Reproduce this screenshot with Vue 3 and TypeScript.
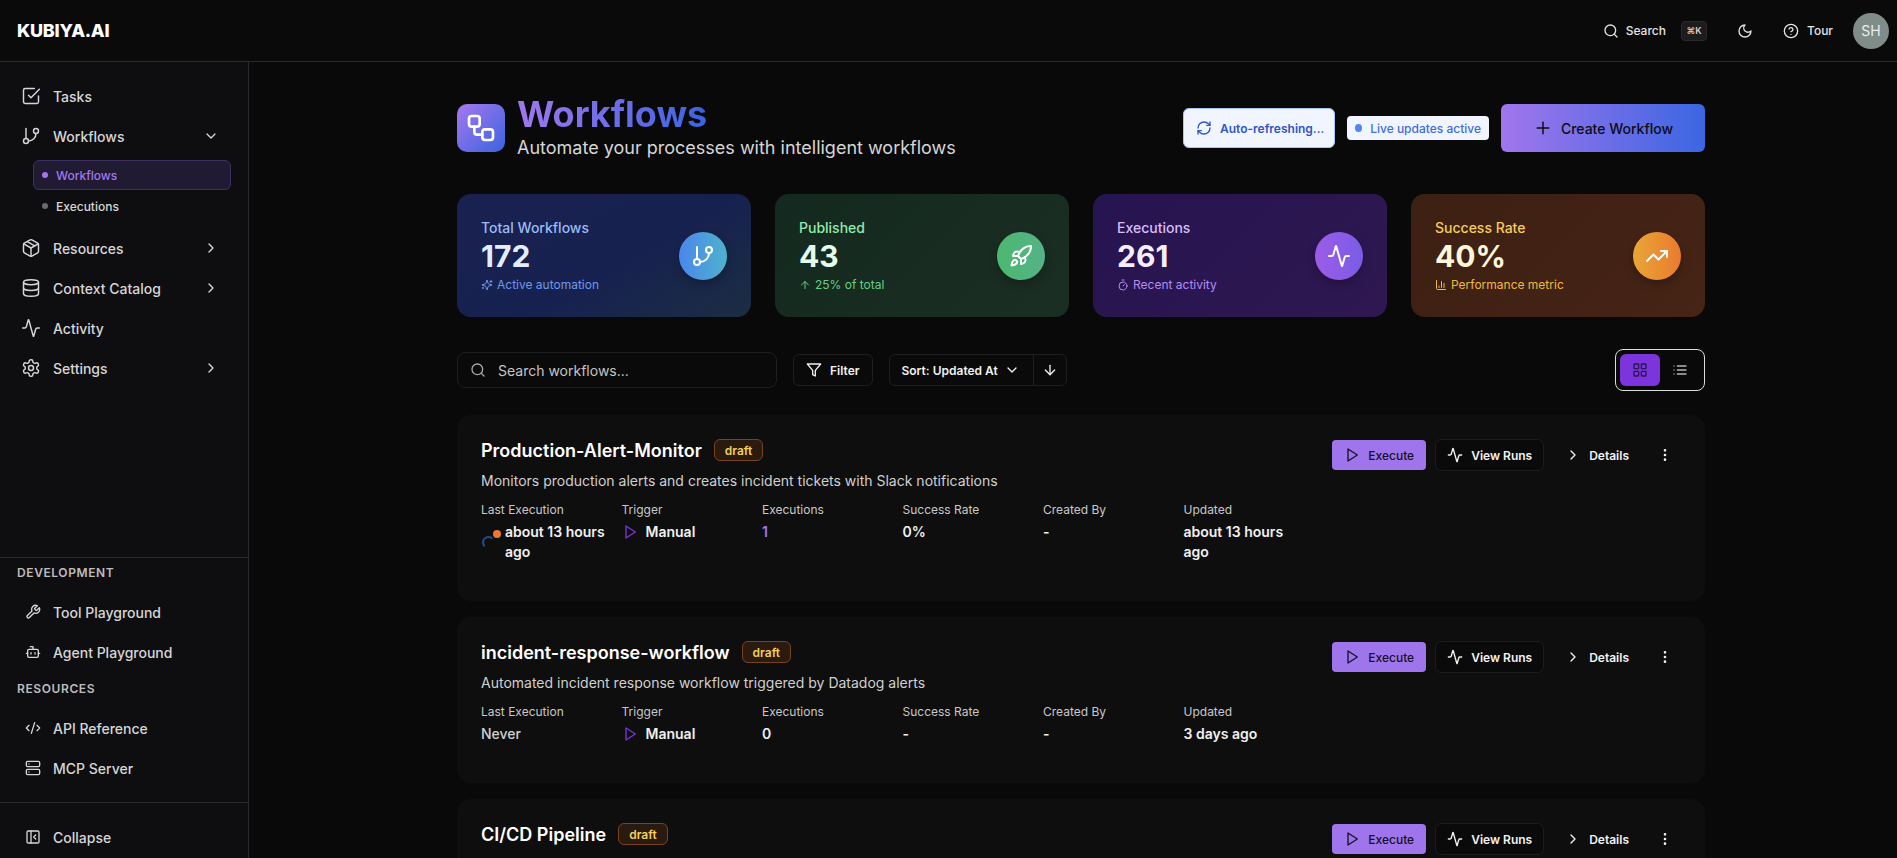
<script setup lang="ts">
const icons: Record<string, string> = {
	tasks: '<polyline points="9 11 12 14 22 4"/><path d="M21 12v7a2 2 0 0 1-2 2H5a2 2 0 0 1-2-2V5a2 2 0 0 1 2-2h11"/>',
	branch: '<line x1="6" y1="3" x2="6" y2="15"/><circle cx="18" cy="6" r="3"/><circle cx="6" cy="18" r="3"/><path d="M18 9a9 9 0 0 1-9 9"/>',
	box: '<path d="m7.5 4.27 9 5.15"/><path d="M21 8a2 2 0 0 0-1-1.73l-7-4a2 2 0 0 0-2 0l-7 4A2 2 0 0 0 3 8v8a2 2 0 0 0 1 1.73l7 4a2 2 0 0 0 2 0l7-4A2 2 0 0 0 21 16Z"/><path d="m3.3 7 8.7 5 8.7-5"/><path d="M12 22V12"/>',
	database: '<ellipse cx="12" cy="5" rx="9" ry="3"/><path d="M3 5V19A9 3 0 0 0 21 19V5"/><path d="M3 12A9 3 0 0 0 21 12"/>',
	activity: '<path d="M22 12h-2.48a2 2 0 0 0-1.93 1.46l-2.35 8.36a.25.25 0 0 1-.48 0L9.24 2.18a.25.25 0 0 0-.48 0l-2.35 8.36A2 2 0 0 1 4.49 12H2"/>',
	settings: '<path d="M12.22 2h-.44a2 2 0 0 0-2 2v.18a2 2 0 0 1-1 1.73l-.43.25a2 2 0 0 1-2 0l-.15-.08a2 2 0 0 0-2.73.73l-.22.38a2 2 0 0 0 .73 2.73l.15.1a2 2 0 0 1 1 1.72v.51a2 2 0 0 1-1 1.74l-.15.09a2 2 0 0 0-.73 2.73l.22.38a2 2 0 0 0 2.73.73l.15-.08a2 2 0 0 1 2 0l.43.25a2 2 0 0 1 1 1.73V20a2 2 0 0 0 2 2h.44a2 2 0 0 0 2-2v-.18a2 2 0 0 1 1-1.73l.43-.25a2 2 0 0 1 2 0l.15.08a2 2 0 0 0 2.73-.73l.22-.39a2 2 0 0 0-.73-2.73l-.15-.08a2 2 0 0 1-1-1.74v-.5a2 2 0 0 1 1-1.74l.15-.09a2 2 0 0 0 .73-2.73l-.22-.38a2 2 0 0 0-2.73-.73l-.15.08a2 2 0 0 1-2 0l-.43-.25a2 2 0 0 1-1-1.73V4a2 2 0 0 0-2-2z"/><circle cx="12" cy="12" r="3"/>',
	wrench: '<path d="M14.7 6.3a1 1 0 0 0 0 1.4l1.6 1.6a1 1 0 0 0 1.4 0l3.77-3.77a6 6 0 0 1-7.94 7.94l-6.91 6.91a2.12 2.12 0 0 1-3-3l6.91-6.91a6 6 0 0 1 7.94-7.94l-3.76 3.76z"/>',
	bot: '<path d="M12 8V4H8"/><rect width="16" height="12" x="4" y="8" rx="2"/><path d="M2 14h2"/><path d="M20 14h2"/><path d="M15 13v2"/><path d="M9 13v2"/>',
	code: '<path d="m18 16 4-4-4-4"/><path d="m6 8-4 4 4 4"/><path d="m14.5 4-5 16"/>',
	server: '<rect width="20" height="8" x="2" y="2" rx="2"/><rect width="20" height="8" x="2" y="14" rx="2"/><line x1="6" y1="6" x2="6.01" y2="6"/><line x1="6" y1="18" x2="6.01" y2="18"/>',
	panel: '<rect width="18" height="18" x="3" y="3" rx="2"/><path d="M9 3v18"/><path d="m16 15-3-3 3-3"/>',
	search: '<circle cx="11" cy="11" r="8"/><path d="m21 21-4.3-4.3"/>',
	moon: '<path d="M12 3a6 6 0 0 0 9 9 9 9 0 1 1-9-9Z"/>',
	help: '<circle cx="12" cy="12" r="10"/><path d="M9.09 9a3 3 0 0 1 5.83 1c0 2-3 3-3 3"/><path d="M12 17h.01"/>',
	workflow: '<rect width="8" height="8" x="3" y="3" rx="2"/><path d="M7 11v4a2 2 0 0 0 2 2h4"/><rect width="8" height="8" x="13" y="13" rx="2"/>',
	refresh: '<path d="M3 12a9 9 0 0 1 9-9 9.75 9.75 0 0 1 6.74 2.74L21 8"/><path d="M21 3v5h-5"/><path d="M21 12a9 9 0 0 1-9 9 9.75 9.75 0 0 1-6.74-2.74L3 16"/><path d="M8 16H3v5"/>',
	plus: '<path d="M5 12h14"/><path d="M12 5v14"/>',
	rocket: '<path d="M4.5 16.5c-1.5 1.26-2 5-2 5s3.74-.5 5-2c.71-.84.7-2.13-.09-2.91a2.18 2.18 0 0 0-2.91-.09z"/><path d="m12 15-3-3a22 22 0 0 1 2-3.95A12.88 12.88 0 0 1 22 2c0 2.72-.78 7.5-6 11a22.35 22.35 0 0 1-4 2z"/><path d="M9 12H4s.55-3.03 2-4c1.62-1.08 5 0 5 0"/><path d="M12 15v5s3.03-.55 4-2c1.08-1.62 0-5 0-5"/>',
	trending: '<polyline points="22 7 13.5 15.5 8.5 10.5 2 17"/><polyline points="16 7 22 7 22 13"/>',
	sparkles: '<path d="M9.937 15.5A2 2 0 0 0 8.5 14.063l-6.135-1.582a.5.5 0 0 1 0-.962L8.5 9.936A2 2 0 0 0 9.937 8.5l1.582-6.135a.5.5 0 0 1 .963 0L14.063 8.5A2 2 0 0 0 15.5 9.937l6.135 1.581a.5.5 0 0 1 0 .964L15.5 14.063a2 2 0 0 0-1.437 1.437l-1.582 6.135a.5.5 0 0 1-.963 0z"/><path d="M20 3v4"/><path d="M22 5h-4"/><path d="M4 17v2"/><path d="M5 18H3"/>',
	arrowUp: '<path d="m5 12 7-7 7 7"/><path d="M12 19V5"/>',
	arrowDown: '<path d="M12 5v14"/><path d="m19 12-7 7-7-7"/>',
	timer: '<line x1="10" y1="2" x2="14" y2="2"/><line x1="12" y1="14" x2="15" y2="11"/><circle cx="12" cy="14" r="8"/>',
	chart: '<path d="M3 3v16a2 2 0 0 0 2 2h16"/><path d="M18 17V9"/><path d="M13 17V5"/><path d="M8 17v-3"/>',
	filter: '<polygon points="22 3 2 3 10 12.46 10 19 14 21 14 12.46 22 3"/>',
	play: '<polygon points="6 3 20 12 6 21 6 3"/>',
	grid: '<rect width="7" height="7" x="3" y="3" rx="1"/><rect width="7" height="7" x="14" y="3" rx="1"/><rect width="7" height="7" x="14" y="14" rx="1"/><rect width="7" height="7" x="3" y="14" rx="1"/>',
	list: '<path d="M3 12h.01"/><path d="M3 18h.01"/><path d="M3 6h.01"/><path d="M8 12h13"/><path d="M8 18h13"/><path d="M8 6h13"/>',
	chevronDown: '<path d="m6 9 6 6 6-6"/>',
	chevronRight: '<path d="m9 18 6-6-6-6"/>',
	more: '<circle cx="12" cy="12" r="1"/><circle cx="12" cy="5" r="1"/><circle cx="12" cy="19" r="1"/>',
};

const topNavAfter = [
	{ label: "Resources", icon: "box", chevron: true },
	{ label: "Context Catalog", icon: "database", chevron: true },
	{ label: "Activity", icon: "activity", chevron: false },
	{ label: "Settings", icon: "settings", chevron: true },
];

const stats = [
	{ key: "blue", label: "Total Workflows", value: "172", sub: "Active automation", subIcon: "sparkles", icon: "branch" },
	{ key: "green", label: "Published", value: "43", sub: "25% of total", subIcon: "arrowUp", icon: "rocket" },
	{ key: "purple", label: "Executions", value: "261", sub: "Recent activity", subIcon: "timer", icon: "activity" },
	{ key: "orange", label: "Success Rate", value: "40%", sub: "Performance metric", subIcon: "chart", icon: "trending" },
];

// the third card runs off the bottom of the window, only its title row is visible
const workflows = [
	{
		name: "Production-Alert-Monitor",
		details: {
			description: "Monitors production alerts and creates incident tickets with Slack notifications",
			last: "about 13 hours ago",
			running: true,
			executions: "1",
			rate: "0%",
			updated: "about 13 hours ago",
		},
	},
	{
		name: "incident-response-workflow",
		details: {
			description: "Automated incident response workflow triggered by Datadog alerts",
			last: "Never",
			running: false,
			executions: "0",
			rate: "-",
			updated: "3 days ago",
		},
	},
	{ name: "CI/CD Pipeline", details: null },
];
</script>

<template>
	<div class="app">
		<header class="topbar">
			<div class="logo">KUBIYA.AI</div>
			<div class="top-actions">
				<svg class="ic i16 search-ic" viewBox="0 0 24 24" v-html="icons.search"></svg>
				<span class="top-text search-text">Search</span>
				<kbd class="kbd">⌘K</kbd>
				<svg class="ic i16 moon-ic" viewBox="0 0 24 24" v-html="icons.moon"></svg>
				<svg class="ic i16 help-ic" viewBox="0 0 24 24" v-html="icons.help"></svg>
				<span class="top-text tour-text">Tour</span>
				<div class="avatar">SH</div>
			</div>
		</header>

		<div class="body">
			<aside class="sidebar">
				<nav class="nav">
					<div class="nav-item">
						<svg class="ic i20" viewBox="0 0 24 24" v-html="icons.tasks"></svg>
						<span>Tasks</span>
					</div>
					<div class="nav-item">
						<svg class="ic i20" viewBox="0 0 24 24" v-html="icons.branch"></svg>
						<span>Workflows</span>
						<svg class="ic i16 chev" viewBox="0 0 24 24" v-html="icons.chevronDown"></svg>
					</div>
					<div class="sub-list">
						<div class="sub-item active"><i class="dot"></i>Workflows</div>
						<div class="sub-item"><i class="dot"></i>Executions</div>
					</div>
					<div v-for="item in topNavAfter" :key="item.label" class="nav-item">
						<svg class="ic i20" viewBox="0 0 24 24" v-html="icons[item.icon]"></svg>
						<span>{{ item.label }}</span>
						<svg v-if="item.chevron" class="ic i16 chev" viewBox="0 0 24 24" v-html="icons.chevronRight"></svg>
					</div>
				</nav>

				<div class="side-section">
					<div class="side-label">DEVELOPMENT</div>
					<div class="nav-item small">
						<svg class="ic i16" viewBox="0 0 24 24" v-html="icons.wrench"></svg>
						<span>Tool Playground</span>
					</div>
					<div class="nav-item small">
						<svg class="ic i16" viewBox="0 0 24 24" v-html="icons.bot"></svg>
						<span>Agent Playground</span>
					</div>
					<div class="side-label second">RESOURCES</div>
					<div class="nav-item small">
						<svg class="ic i16" viewBox="0 0 24 24" v-html="icons.code"></svg>
						<span>API Reference</span>
					</div>
					<div class="nav-item small">
						<svg class="ic i16" viewBox="0 0 24 24" v-html="icons.server"></svg>
						<span>MCP Server</span>
					</div>
				</div>
				<div class="side-footer">
					<div class="nav-item small">
						<svg class="ic i16" viewBox="0 0 24 24" v-html="icons.panel"></svg>
						<span>Collapse</span>
					</div>
				</div>
			</aside>

			<main class="main">
				<div class="content">
					<section class="page-head">
						<div class="head-icon">
							<svg class="ic i32" viewBox="0 0 24 24" v-html="icons.workflow"></svg>
						</div>
						<div class="head-text">
							<h1>Workflows</h1>
							<p>Automate your processes with intelligent workflows</p>
						</div>
						<div class="head-actions">
							<button class="refresh-btn">
								<svg class="ic i16" viewBox="0 0 24 24" v-html="icons.refresh"></svg>
								Auto-refreshing...
							</button>
							<div class="live"><i></i>Live updates active</div>
							<button class="create-btn">
								<svg class="ic i20 plus" viewBox="0 0 24 24" v-html="icons.plus"></svg>
								Create Workflow
							</button>
						</div>
					</section>

					<section class="stats">
						<div v-for="stat in stats" :key="stat.key" class="stat" :class="stat.key">
							<div>
								<div class="stat-label">{{ stat.label }}</div>
								<div class="stat-value">{{ stat.value }}</div>
								<div class="stat-sub">
									<svg class="ic i12" viewBox="0 0 24 24" v-html="icons[stat.subIcon]"></svg>
									{{ stat.sub }}
								</div>
							</div>
							<div class="stat-circle">
								<svg class="ic i24" viewBox="0 0 24 24" v-html="icons[stat.icon]"></svg>
							</div>
						</div>
					</section>

					<section class="toolbar">
						<label class="search">
							<svg class="ic i16" viewBox="0 0 24 24" v-html="icons.search"></svg>
							<input type="text" placeholder="Search workflows..." />
						</label>
						<button class="tool-btn">
							<svg class="ic i16" viewBox="0 0 24 24" v-html="icons.filter"></svg>
							Filter
						</button>
						<div class="sort">
							<div class="sort-main">
								Sort: Updated At
								<svg class="ic i16" viewBox="0 0 24 24" v-html="icons.chevronDown"></svg>
							</div>
							<div class="sort-dir">
								<svg class="ic i16" viewBox="0 0 24 24" v-html="icons.arrowDown"></svg>
							</div>
						</div>
						<div class="view-toggle">
							<div class="view-opt on">
								<svg class="ic i16" viewBox="0 0 24 24" v-html="icons.grid"></svg>
							</div>
							<div class="view-opt">
								<svg class="ic i16" viewBox="0 0 24 24" v-html="icons.list"></svg>
							</div>
						</div>
					</section>

					<section class="cards">
						<article v-for="wf in workflows" :key="wf.name" class="card">
							<div class="card-left">
								<div class="card-title">
									<h3>{{ wf.name }}</h3>
									<span class="badge">draft</span>
								</div>
								<template v-if="wf.details">
									<p class="card-desc">{{ wf.details.description }}</p>
									<div class="meta">
										<div>
											<div class="meta-label">Last Execution</div>
											<div class="meta-value last">
												<span v-if="wf.details.running" class="status">
													<i class="spin"></i>
													<i class="pulse"></i>
												</span>
												<span :class="{ muted: !wf.details.running }">{{ wf.details.last }}</span>
											</div>
										</div>
										<div>
											<div class="meta-label">Trigger</div>
											<div class="meta-value trigger">
												<svg class="ic i16" viewBox="0 0 24 24" v-html="icons.play"></svg>
												Manual
											</div>
										</div>
										<div>
											<div class="meta-label">Executions</div>
											<div class="meta-value" :class="{ purple: wf.details.executions !== '0' }">{{ wf.details.executions }}</div>
										</div>
										<div>
											<div class="meta-label">Success Rate</div>
											<div class="meta-value">{{ wf.details.rate }}</div>
										</div>
										<div>
											<div class="meta-label">Created By</div>
											<div class="meta-value">-</div>
										</div>
										<div>
											<div class="meta-label">Updated</div>
											<div class="meta-value">{{ wf.details.updated }}</div>
										</div>
									</div>
								</template>
							</div>
							<div class="card-actions">
								<button class="act execute">
									<svg class="ic i16" viewBox="0 0 24 24" v-html="icons.play"></svg>
									Execute
								</button>
								<button class="act runs">
									<svg class="ic i16" viewBox="0 0 24 24" v-html="icons.activity"></svg>
									View Runs
								</button>
								<button class="act details">
									<svg class="ic i16" viewBox="0 0 24 24" v-html="icons.chevronRight"></svg>
									Details
								</button>
								<button class="act dots">
									<svg class="ic i16" viewBox="0 0 24 24" v-html="icons.more"></svg>
								</button>
							</div>
						</article>
					</section>
				</div>
			</main>
		</div>
	</div>
</template>

<style>
html,
body {
	margin: 0;
	background: #090909;
	overflow: hidden;
}
</style>

<style scoped>
.app {
	display: flex;
	flex-direction: column;
	height: 858px;
	overflow: hidden;
	background: #090909;
	color: #f2f2f2;
	font-family: Inter, "Noto Sans", sans-serif;
}

.ic {
	flex: none;
	fill: none;
	stroke: currentColor;
	stroke-width: 2;
	stroke-linecap: round;
	stroke-linejoin: round;
}
.i12 {
	width: 12px;
	height: 12px;
}
.i16 {
	width: 16px;
	height: 16px;
}
.i20 {
	width: 20px;
	height: 20px;
	stroke-width: 1.75;
}
.i24 {
	width: 24px;
	height: 24px;
}
.i32 {
	width: 32px;
	height: 32px;
}

button {
	font-family: inherit;
	cursor: pointer;
}

/* top bar */
.topbar {
	flex: none;
	display: flex;
	align-items: center;
	justify-content: space-between;
	box-sizing: border-box;
	height: 62px;
	padding: 0 8px 0 17px;
	background: #0a0a0a;
	border-bottom: 1px solid #2a2a2a;
}
.logo {
	font-size: 18px;
	font-weight: 800;
	line-height: 24px;
	letter-spacing: -0.015em;
	color: #fff;
}
.top-actions {
	display: flex;
	align-items: center;
	color: #e4e4e4;
}
.top-text {
	font-size: 12px;
	font-weight: 500;
}
.search-ic {
	margin-right: 7px;
}
.kbd {
	display: flex;
	align-items: center;
	justify-content: center;
	box-sizing: border-box;
	width: 26px;
	height: 20px;
	margin-left: 15px;
	background: #1c1c1e;
	border: 1px solid #2a2a2a;
	border-radius: 4px;
	font-family: inherit;
	font-size: 9px;
	font-weight: 600;
	color: #cfcfcf;
}
.moon-ic {
	margin-left: 30px;
}
.help-ic {
	margin-left: 30px;
}
.tour-text {
	margin-left: 8px;
	margin-right: 20px;
}
.avatar {
	display: flex;
	align-items: center;
	justify-content: center;
	width: 36px;
	height: 36px;
	border-radius: 50%;
	background: #7f8c88;
	font-size: 14px;
	color: #e8ecea;
}

.body {
	flex: 1;
	display: flex;
	min-height: 0;
}

/* sidebar */
.sidebar {
	flex: none;
	display: flex;
	flex-direction: column;
	box-sizing: border-box;
	width: 249px;
	background: #0e0e10;
	border-right: 1px solid #2a2a2a;
}
.nav {
	padding-top: 14px;
}
.nav-item {
	display: flex;
	align-items: center;
	gap: 12px;
	height: 40px;
	padding-left: 21px;
	font-size: 14px;
	font-weight: 500;
	color: #d6d6d6;
}
.nav-item.small {
	padding-left: 25px;
}
.chev {
	margin-left: auto;
	margin-right: 29px;
}
.sub-list {
	margin: 4px 17px 7px 33px;
}
.sub-item {
	display: flex;
	align-items: center;
	gap: 8px;
	box-sizing: border-box;
	height: 30px;
	padding-left: 8px;
	border: 1px solid transparent;
	border-radius: 6px;
	font-size: 12px;
	font-weight: 500;
	color: #d6d6d6;
}
.sub-item + .sub-item {
	margin-top: 1px;
}
.sub-item .dot {
	width: 6px;
	height: 6px;
	border-radius: 50%;
	background: #6b6b6b;
}
.sub-item.active {
	background: #211a33;
	border-color: #3e2f63;
	color: #a078ee;
}
.sub-item.active .dot {
	background: #a078ee;
}
.side-section {
	margin-top: auto;
	padding: 7px 0 14px;
	border-top: 1px solid #2a2a2a;
}
.side-label {
	margin: 0 0 11px 17px;
	font-size: 12px;
	font-weight: 600;
	line-height: 16px;
	letter-spacing: 0.05em;
	color: #bdbdbd;
}
.side-label.second {
	margin-top: 9px;
}
.side-footer {
	padding: 14px 0 1px;
	border-top: 1px solid #2a2a2a;
}

/* main */
.main {
	flex: 1;
	min-width: 0;
	overflow: hidden;
}
.content {
	width: 1248px;
	margin-left: 208px;
	padding-top: 32px;
}
.page-head {
	display: flex;
	align-items: center;
	height: 68px;
	margin-bottom: 32px;
}
.head-icon {
	display: flex;
	align-items: center;
	justify-content: center;
	width: 48px;
	height: 48px;
	margin-right: 12px;
	border-radius: 10px;
	background: linear-gradient(135deg, #a678ee, #3b63e0);
	color: #fff;
}
.head-text h1 {
	margin: 0;
	font-size: 36px;
	font-weight: 700;
	line-height: 40px;
	background: linear-gradient(90deg, #a078ee, #3b63e0);
	-webkit-background-clip: text;
	background-clip: text;
	color: transparent;
	width: max-content;
}
.head-text p {
	margin: 0;
	font-size: 18px;
	line-height: 28px;
	color: #d6d6d6;
}
.head-actions {
	display: flex;
	align-items: center;
	margin-left: auto;
}
.refresh-btn {
	display: flex;
	align-items: center;
	gap: 8px;
	box-sizing: border-box;
	width: 152px;
	height: 40px;
	padding: 0 12px;
	background: #f0f5ff;
	border: 1px solid #a6c5f5;
	border-radius: 6px;
	font-size: 12px;
	font-weight: 600;
	color: #2f55c8;
	white-space: nowrap;
}
.live {
	display: flex;
	align-items: center;
	gap: 8px;
	box-sizing: border-box;
	width: 142px;
	height: 24px;
	margin-left: 12px;
	padding: 0 8px;
	background: #f0f5ff;
	border-radius: 4px;
	font-size: 12px;
	font-weight: 500;
	color: #3f6ce0;
	white-space: nowrap;
}
.live i {
	width: 8px;
	height: 8px;
	border-radius: 50%;
	background: #4f86f0;
}
.create-btn {
	display: flex;
	align-items: center;
	justify-content: center;
	gap: 8px;
	width: 204px;
	height: 48px;
	margin-left: 12px;
	padding: 0;
	border: none;
	border-radius: 6px;
	background: linear-gradient(90deg, #a176ec, #3b66e2);
	font-size: 14px;
	font-weight: 500;
	color: #0c0c14;
}

/* stat cards */
.stats {
	display: grid;
	grid-template-columns: repeat(4, 1fr);
	gap: 24px;
	margin-bottom: 32px;
}
.stat {
	display: flex;
	align-items: center;
	justify-content: space-between;
	padding: 24px;
	border-radius: 14px;
}
.stat-label {
	font-size: 14px;
	font-weight: 500;
	line-height: 20px;
}
.stat-value {
	font-size: 30px;
	font-weight: 700;
	line-height: 36px;
}
.stat-sub {
	display: flex;
	align-items: center;
	gap: 4px;
	margin-top: 3px;
	font-size: 12px;
	line-height: 16px;
}
.stat-circle {
	display: flex;
	align-items: center;
	justify-content: center;
	width: 48px;
	height: 48px;
	border-radius: 50%;
	color: #fff;
	box-shadow: 0 4px 10px rgba(0, 0, 0, 0.25);
}
.stat.blue {
	background: linear-gradient(150deg, #192150 0%, #172150 55%, #1b2d42 100%);
}
.blue .stat-label {
	color: #9abbf5;
}
.blue .stat-value {
	color: #e4ecff;
}
.blue .stat-sub {
	color: #6f97ee;
}
.blue .stat-circle {
	background: linear-gradient(90deg, #4a86ec, #4fb2cc);
}
.stat.green {
	background: linear-gradient(135deg, #14291f, #1b2e23);
}
.green .stat-label {
	color: #90e9ad;
}
.green .stat-value {
	color: #e4faea;
}
.green .stat-sub {
	color: #62d085;
}
.green .stat-circle {
	background: linear-gradient(90deg, #4bb870, #55b287);
}
.stat.purple {
	background: linear-gradient(135deg, #261450, #2f1850);
}
.purple .stat-label {
	color: #d8bdf9;
}
.purple .stat-value {
	color: #f6edff;
}
.purple .stat-sub {
	color: #b48cf0;
}
.purple .stat-circle {
	background: linear-gradient(90deg, #9c5ce8, #7a5ce6);
}
.stat.orange {
	background: linear-gradient(135deg, #3c2012, #462416);
}
.orange .stat-label {
	color: #f6cd5e;
}
.orange .stat-value {
	color: #fff6da;
}
.orange .stat-sub {
	color: #efb942;
}
.orange .stat-circle {
	background: linear-gradient(90deg, #eaa636, #e97a30);
}

/* toolbar */
.toolbar {
	display: flex;
	align-items: center;
	height: 42px;
	margin-bottom: 24px;
}
.search {
	display: flex;
	align-items: center;
	gap: 12px;
	box-sizing: border-box;
	width: 320px;
	height: 36px;
	padding: 0 12px;
	background: #0a0a0a;
	border: 1px solid #1e1e1e;
	border-radius: 8px;
	color: #a8a8a8;
}
.search input {
	flex: 1;
	min-width: 0;
	padding: 0;
	background: transparent;
	border: none;
	outline: none;
	font-family: inherit;
	font-size: 14px;
	color: #eee;
}
.search input::placeholder {
	color: #c4c4c4;
	opacity: 1;
}
.tool-btn {
	display: flex;
	align-items: center;
	gap: 8px;
	box-sizing: border-box;
	height: 32px;
	margin-left: 16px;
	padding: 0 12px;
	background: #0a0a0a;
	border: 1px solid #1e1e1e;
	border-radius: 6px;
	font-size: 12px;
	font-weight: 600;
	color: #f0f0f0;
}
.sort {
	display: flex;
	align-items: stretch;
	box-sizing: border-box;
	height: 32px;
	margin-left: 16px;
	background: #0a0a0a;
	border: 1px solid #1e1e1e;
	border-radius: 6px;
	font-size: 12px;
	font-weight: 600;
	color: #f0f0f0;
}
.sort-main {
	display: flex;
	align-items: center;
	gap: 6px;
	width: 144px;
	box-sizing: border-box;
	padding-left: 12px;
	border-right: 1px solid #1e1e1e;
	white-space: nowrap;
}
.sort-dir {
	display: flex;
	align-items: center;
	justify-content: center;
	width: 32px;
}
.view-toggle {
	display: flex;
	box-sizing: border-box;
	height: 42px;
	margin-left: auto;
	padding: 4px;
	border: 1px solid #dcdcdc;
	border-radius: 8px;
}
.view-opt {
	display: flex;
	align-items: center;
	justify-content: center;
	width: 40px;
	height: 32px;
	border-radius: 6px;
	color: #b5b5b5;
}
.view-opt.on {
	background: #7c35dc;
	color: #2b1355;
}

/* workflow cards */
.cards {
	display: flex;
	flex-direction: column;
	gap: 16px;
}
.card {
	display: flex;
	justify-content: space-between;
	box-sizing: border-box;
	padding: 21px 24px 39px;
	background: #0e0e0e;
	border-radius: 14px;
}
.card-title {
	display: flex;
	align-items: center;
	gap: 12px;
	height: 28px;
}
.card-title h3 {
	margin: 0;
	font-size: 18px;
	font-weight: 600;
	color: #fff;
}
.badge {
	display: flex;
	align-items: center;
	box-sizing: border-box;
	height: 22px;
	padding: 0 10px;
	background: #2a1a10;
	border: 1px solid #7a4320;
	border-radius: 6px;
	font-size: 12px;
	font-weight: 600;
	color: #f5cf58;
}
.card-desc {
	margin: 7px 0 0;
	font-size: 14px;
	line-height: 20px;
	color: #d0d0d0;
}
.meta {
	display: grid;
	grid-template-columns: repeat(6, 124.5px);
	gap: 16px;
	margin-top: 11px;
}
.meta-label {
	font-size: 12px;
	line-height: 16px;
	color: #c8c8c8;
}
.meta-value {
	margin-top: 4px;
	font-size: 14px;
	font-weight: 600;
	line-height: 20px;
	color: #f0f0f0;
}
.meta-value.purple {
	color: #a078ee;
}
.last {
	display: flex;
}
.muted {
	color: #d0d0d0;
	font-weight: 500;
}
.status {
	position: relative;
	flex: none;
	width: 24px;
	height: 20px;
}
.spin {
	position: absolute;
	left: 1px;
	top: 14px;
	box-sizing: border-box;
	width: 13px;
	height: 13px;
	border: 2px solid transparent;
	border-top-color: #2a4a90;
	border-left-color: #2a4a90;
	border-radius: 50%;
}
.pulse {
	position: absolute;
	left: 12px;
	top: 8px;
	width: 8px;
	height: 8px;
	border-radius: 50%;
	background: #e97a30;
}
.trigger {
	display: flex;
	align-items: center;
	gap: 8px;
}
.trigger .ic {
	color: #7c35dc;
}
.card-actions {
	display: flex;
	align-items: center;
	gap: 10px;
	height: 32px;
	margin-top: 3px;
}
.act {
	display: flex;
	align-items: center;
	gap: 8px;
	box-sizing: border-box;
	font-size: 12px;
	font-weight: 600;
	color: #f2f2f2;
	background: transparent;
	border: none;
	white-space: nowrap;
}
.execute {
	height: 30px;
	margin-right: -1px;
	padding: 0 12px;
	background: #9f75ec;
	border-radius: 4px;
	font-weight: 500;
	color: #161028;
}
.runs {
	height: 32px;
	padding: 0 11px;
	background: #0a0a0a;
	border: 1px solid #1c1c1c;
	border-radius: 6px;
}
.details {
	height: 32px;
	padding: 0 12px 0 11px;
}
.dots {
	justify-content: center;
	width: 32px;
	height: 32px;
	margin-left: -2px;
	padding: 0;
}
</style>
